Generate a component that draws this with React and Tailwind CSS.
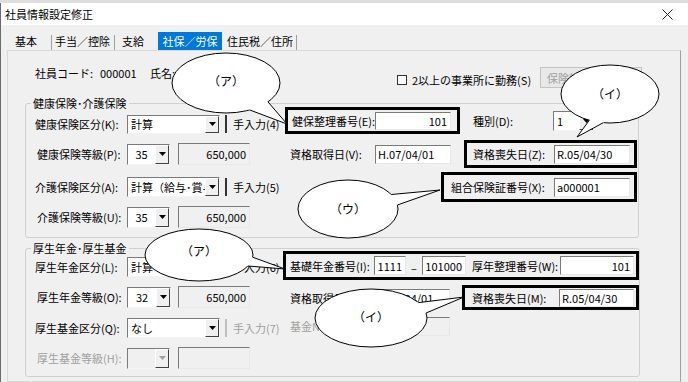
import React from 'react';

const Tri = ({ disabled }) => (
  <svg width="7" height="4" viewBox="0 0 7 4">
    <polygon points="0,0 7,0 3.5,4" fill={disabled ? '#a0a0a0' : '#000'} />
  </svg>
);

function Drop({ value, className, disabled, center }) {
  return (
    <div className={`flex shrink-0 border border-t-[#7a7a7a] border-l-[#7a7a7a] border-b-[#f4f4f4] border-r-[#f4f4f4] ${disabled ? 'bg-[#f0f0f0]' : 'bg-white'} ${className}`}>
      <div className={`flex-1 flex items-center overflow-hidden whitespace-nowrap ${center ? 'justify-center' : 'pl-[3px]'}`}>{value}</div>
      <div className="w-[14px] flex items-center justify-center bg-[#f0f0f0] border border-t-white border-l-white border-b-[#404040] border-r-[#404040]">
        <Tri disabled={disabled} />
      </div>
    </div>
  );
}

function Field({ value, className, right, disabled, ro }) {
  return (
    <div className={`flex shrink-0 items-center whitespace-nowrap border border-t-[#7a7a7a] border-l-[#7a7a7a] border-b-[#e8e8e8] border-r-[#e8e8e8] ${disabled || ro ? 'bg-[#f0f0f0]' : 'bg-white'} ${right ? 'justify-end pr-[3px]' : 'pl-[2px]'} ${className}`}>
      {value}
    </div>
  );
}

const Check = ({ disabled }) => (
  <span className={`w-[10px] h-[10px] shrink-0 bg-white border ${disabled ? 'border-[#c0c0c0]' : 'border-[#333]'}`} />
);

function Row({ label, mt, h, gray, indent, children }) {
  return (
    <div className={`flex items-center ${mt} ${h}`}>
      <span className={`w-[92px] shrink-0 whitespace-nowrap ${indent ? 'pl-[2px]' : ''} ${gray ? 'text-[#a0a0a0]' : ''}`}>{label}</span>
      {children}
    </div>
  );
}

const callouts = [
  { cx: 226, cy: 83, rx: 54, ry: 30, a1: 39, a2: 64, tx: 287, ty: 124, ly: 82, label: '（ア）' },
  { cx: 610, cy: 94, rx: 49, ry: 29, a1: 98, a2: 115, tx: 577, ty: 137, ly: 95, label: '（イ）' },
  { cx: 348, cy: 209, rx: 50, ry: 29, a1: -30, a2: -8, tx: 440, ty: 190, ly: 210, label: '（ウ）' },
  { cx: 199, cy: 255, rx: 54, ry: 26, a1: 5, a2: 25, tx: 285, ty: 269, ly: 252, label: '（ア）' },
  { cx: 371, cy: 318, rx: 56, ry: 29, a1: -32, a2: -10, tx: 464, ty: 297, ly: 318, label: '（イ）' },
];

function Callouts() {
  return (
    <svg className="absolute inset-0 pointer-events-none" width="688" height="382">
      {callouts.map((c, i) => {
        const edge = (a) => {
          const r = (a * Math.PI) / 180;
          return [c.cx + c.rx * Math.cos(r), c.cy + c.ry * Math.sin(r)];
        };
        const e1 = edge(c.a1);
        const e2 = edge(c.a2);
        const inner = (e) => [e[0] + (e[0] - c.tx) * 0.3, e[1] + (e[1] - c.ty) * 0.3];
        const i1 = inner(e1);
        const i2 = inner(e2);
        return (
          <g key={i}>
            <ellipse cx={c.cx} cy={c.cy} rx={c.rx} ry={c.ry} fill="#fff" stroke="#000" strokeWidth="1" />
            <polygon points={`${c.tx},${c.ty} ${i1[0]},${i1[1]} ${i2[0]},${i2[1]}`} fill="#fff" />
            <path d={`M${e1[0]} ${e1[1]} L${c.tx} ${c.ty} L${e2[0]} ${e2[1]}`} fill="none" stroke="#000" strokeWidth="1" />
            <text x={c.cx} y={c.ly + 4} textAnchor="middle" fontSize="12" fontFamily="'Noto Sans CJK JP', sans-serif" fill="#000">{c.label}</text>
          </g>
        );
      })}
    </svg>
  );
}

const tabs = [
  { t: '基本', w: 'w-[43px] pl-[6px] border-r border-[#a0a0a0]' },
  { t: '手当／控除', w: 'w-[63px] pl-[3px] border-r border-[#a0a0a0]' },
  { t: '支給', w: 'w-[43px] pl-[7px]' },
  { t: '社保／労保', w: 'w-[64px] justify-center bg-[#0078d7] text-white', sel: true },
  { t: '住民税／住所', w: 'w-[75px] pl-[5px] border-r border-[#a0a0a0]' },
];

export default function App() {
  return (
    <div className="relative w-[688px] h-[382px] overflow-hidden bg-white text-[11px] leading-[14px] text-black font-['Noto_Sans_CJK_JP','Noto_Sans',sans-serif]">
      <div className="h-[3px] bg-[#dedede]" />
      <div className="h-[379px] flex flex-col border-l border-[#6b6b6b]">
        <div className="h-[22px] shrink-0 bg-white flex items-center justify-between pl-[4px] pr-[15px]">
          <span>社員情報設定修正</span>
          <svg width="11" height="11" viewBox="0 0 11 11">
            <path d="M0.5 0.5 L10.5 10.5 M10.5 0.5 L0.5 10.5" stroke="#222" strokeWidth="1" />
          </svg>
        </div>

        <div className="flex-1 bg-[#f0f0f0] pt-[7px]">
          <div className="flex h-[18px] ml-[8px]">
            {tabs.map((tab) => (
              <div key={tab.t} className={`flex items-center whitespace-nowrap ${tab.sel ? 'h-[18px]' : 'h-[15px] mt-[3px]'} ${tab.w}`}>
                <span className={tab.sel ? '' : '-mt-[3px]'}>{tab.t}</span>
              </div>
            ))}
          </div>

          <div className="ml-[6px] w-[674px] h-[332px] border border-[#d9d9d9] border-r-[#a0a0a0]">
            <div className="flex items-start h-[45px] pl-[27px]">
              <span className="w-[65px] mt-[15px] whitespace-nowrap">社員コード:</span>
              <span className="w-[50px] mt-[15px]">000001</span>
              <span className="w-[247px] mt-[15px]">氏名:</span>
              <div className="w-[143px] h-[14px] mt-[22px] flex items-center gap-[5px] whitespace-nowrap">
                <Check />
                <span>2以上の事業所に勤務(S)</span>
              </div>
              <div className="w-[102px] h-[21px] mt-[16px] flex items-center pl-[6px] bg-[#e8e8e8] border border-[#c4c4c4] text-[#a0a0a0] whitespace-nowrap overflow-hidden">保険料率等設定</div>
            </div>

            <fieldset className="ml-[17px] w-[614px] h-[142px] border border-[#d0d0d0] rounded-[3px]">
              <legend className="ml-[5px] px-[2px] leading-[14px]">健康保険･介護保険</legend>
              <div className="flex pl-[9px]">
                <div className="w-[250px] shrink-0 overflow-hidden flex flex-col">
                  <Row label="健康保険区分(K):" mt="mt-[4px]" h="h-[20px]">
                    <Drop value="計算" className="w-[93px] h-[19px]" />
                    <span className="ml-[5px]"><Check /></span>
                    <span className="ml-[6px] whitespace-nowrap">手入力(4)</span>
                  </Row>
                  <Row label="健康保険等級(P):" mt="mt-[9px]" h="h-[22px]" indent>
                    <Drop value="35" center className="w-[43px] h-[21px]" />
                    <Field value="650,000" ro right className="ml-[8px] w-[72px] h-[22px]" />
                  </Row>
                  <Row label="介護保険区分(A):" mt="mt-[12px]" h="h-[20px]">
                    <Drop value="計算（給与･賞与）" className="w-[93px] h-[20px]" />
                    <span className="ml-[5px]"><Check /></span>
                    <span className="ml-[6px] whitespace-nowrap">手入力(5)</span>
                  </Row>
                  <Row label="介護保険等級(U):" mt="mt-[9px]" h="h-[22px]" indent>
                    <Drop value="35" center className="w-[43px] h-[21px]" />
                    <Field value="650,000" ro right className="ml-[8px] w-[72px] h-[22px]" />
                  </Row>
                </div>

                <div className="flex flex-col">
                  <div className="flex items-center h-[27px] -mt-[3px]">
                    <div className="flex items-center w-[175px] h-[27px] shrink-0 border-[3px] border-black pl-[4px] bg-[#f0f0f0]">
                      <span className="w-[83px] shrink-0 whitespace-nowrap">健保整理番号(E):</span>
                      <Field value="101" right className="w-[76px] h-[18px]" />
                    </div>
                    <span className="ml-[13px] w-[80px] shrink-0 whitespace-nowrap">種別(D):</span>
                    <Drop value="1" className="w-[41px] h-[20px]" />
                  </div>
                  <div className="flex items-center h-[28px] mt-[6px]">
                    <span className="ml-[5px] w-[85px] shrink-0 whitespace-nowrap">資格取得日(V):</span>
                    <Field value="H.07/04/01" className="w-[76px] h-[19px]" />
                    <div className="ml-[13px] flex items-center w-[173px] h-[28px] shrink-0 border-[3px] border-black pl-[6px] bg-[#f0f0f0]">
                      <span className="w-[81px] shrink-0 whitespace-nowrap">資格喪失日(Z):</span>
                      <Field value="R.05/04/30" className="w-[76px] h-[19px]" />
                    </div>
                  </div>
                  <div className="flex items-center h-[30px] mt-[4px]">
                    <div className="ml-[156px] flex items-center w-[196px] h-[30px] shrink-0 border-[3px] border-black pl-[7px] bg-[#f0f0f0]">
                      <span className="w-[103px] shrink-0 whitespace-nowrap">組合保険証番号(X):</span>
                      <Field value="a000001" className="w-[76px] h-[19px]" />
                    </div>
                  </div>
                </div>
              </div>
            </fieldset>

            <fieldset className="mt-[3px] ml-[17px] w-[614px] h-[136px] border border-[#d0d0d0] rounded-[3px]">
              <legend className="ml-[5px] px-[2px] leading-[14px]">厚生年金･厚生基金</legend>
              <div className="flex pl-[9px]">
                <div className="w-[248px] shrink-0 overflow-hidden flex flex-col">
                  <Row label="厚生年金区分(L):" mt="mt-[2px]" h="h-[20px]">
                    <Drop value="計算" className="w-[93px] h-[20px]" />
                    <span className="ml-[5px]"><Check /></span>
                    <span className="ml-[6px] whitespace-nowrap">手入力(6)</span>
                  </Row>
                  <Row label="厚生年金等級(O):" mt="mt-[9px]" h="h-[22px]" indent>
                    <Drop value="32" center className="w-[44px] h-[21px]" />
                    <Field value="650,000" ro right className="ml-[7px] w-[72px] h-[22px]" />
                  </Row>
                  <Row label="厚生基金区分(Q):" mt="mt-[10px]" h="h-[20px]">
                    <Drop value="なし" className="w-[93px] h-[20px]" />
                    <span className="ml-[5px]"><Check disabled /></span>
                    <span className="ml-[6px] whitespace-nowrap text-[#a0a0a0]">手入力(7)</span>
                  </Row>
                  <Row label="厚生基金等級(H):" mt="mt-[9px]" h="h-[22px]" gray indent>
                    <Drop value="" disabled className="w-[43px] h-[21px]" />
                    <Field value="" ro className="ml-[8px] w-[72px] h-[22px]" />
                  </Row>
                </div>

                <div className="flex flex-col">
                  <div className="flex items-center w-[356px] h-[29px] -mt-[4px] shrink-0 border-[3px] border-black pl-[4px] bg-[#f0f0f0]">
                    <span className="w-[84px] shrink-0 whitespace-nowrap">基礎年金番号(I):</span>
                    <Field value="1111" right className="w-[32px] h-[19px]" />
                    <span className="w-[16px] shrink-0 text-center pt-[4px]">–</span>
                    <Field value="101000" right className="w-[44px] h-[19px]" />
                    <span className="ml-[6px] w-[88px] shrink-0 whitespace-nowrap">厚年整理番号(W):</span>
                    <Field value="101" right className="w-[74px] h-[19px]" />
                  </div>
                  <div className="flex items-center h-[25px] mt-[5px]">
                    <span className="ml-[7px] w-[84px] shrink-0 whitespace-nowrap">資格取得日(Y):</span>
                    <Field value="H.07/04/01" className="w-[76px] h-[17px]" />
                    <div className="ml-[12px] flex items-center w-[177px] h-[25px] shrink-0 border-[3px] border-black pl-[7px] bg-[#f0f0f0]">
                      <span className="w-[87px] shrink-0 whitespace-nowrap">資格喪失日(M):</span>
                      <Field value="R.05/04/30" className="w-[75px] h-[18px]" />
                    </div>
                  </div>
                  <div className="flex items-center h-[20px] mt-[6px]">
                    <span className="ml-[7px] w-[85px] shrink-0 whitespace-nowrap text-[#a0a0a0]">基金No.(N):</span>
                    <Field value="" disabled className="w-[75px] h-[19px]" />
                  </div>
                </div>
              </div>
            </fieldset>
          </div>
        </div>
      </div>
      <Callouts />
    </div>
  );
}
